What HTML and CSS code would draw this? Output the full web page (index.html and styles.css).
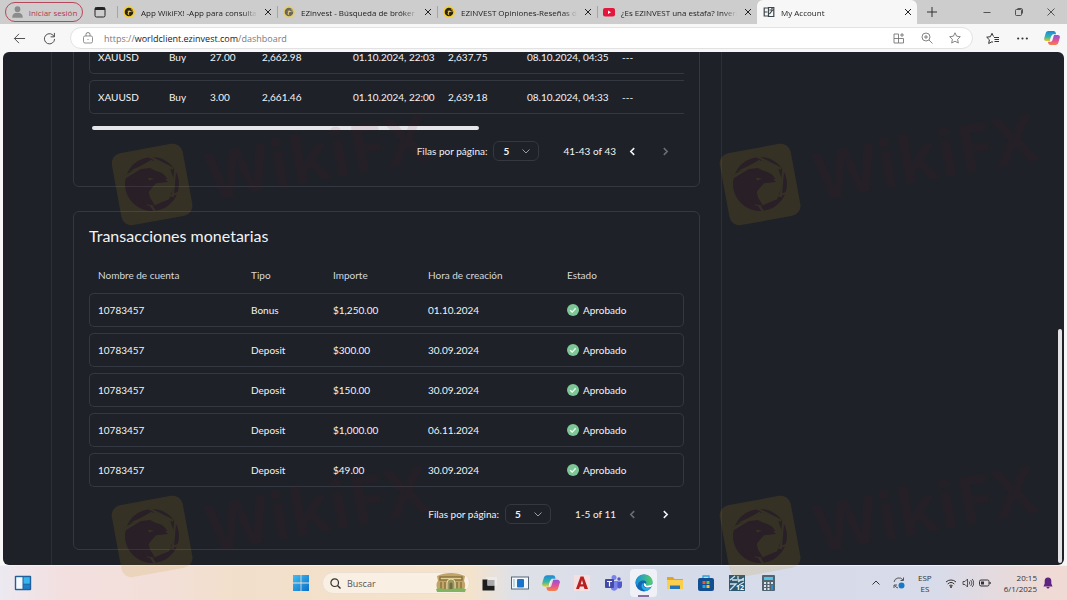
FILE: index.html
```
<!DOCTYPE html>
<html lang="es">
<head>
    <meta charset="UTF-8">
    <meta name="viewport" content="width=device-width, initial-scale=1.0">
    <title>My Account</title>
    <link rel="stylesheet" href="styles.css">
</head>
<body>
    <!-- Shared symbols -->
    <svg class="symbols" aria-hidden="true">
        <symbol id="i-close" viewBox="0 0 8 8"><path d="M1 1l6 6M7 1L1 7" fill="none" stroke="currentColor"/></symbol>
        <symbol id="i-down" viewBox="0 0 8 8"><path d="M0.500 2.500L4 6l3.500-3.500" fill="none" stroke="currentColor"/></symbol>
        <symbol id="i-prev" viewBox="0 0 8 8"><path d="M5.500 1L2.500 4l3 3" fill="none" stroke="currentColor" stroke-width="1.400"/></symbol>
        <symbol id="i-next" viewBox="0 0 8 8"><path d="M2.500 1l3 3-3 3" fill="none" stroke="currentColor" stroke-width="1.400"/></symbol>
        <symbol id="i-check" viewBox="0 0 12 12"><circle cx="6" cy="6" r="6" fill="#7cc795"/><path d="M3.300 6.200l1.900 1.900 3.500-3.800" fill="none" stroke="#f2fff5" stroke-width="1.300"/></symbol>
        <symbol id="i-wiki" viewBox="0 0 12 12"><circle cx="6" cy="6" r="6" fill="#f4d03a"/><circle cx="6" cy="6" r="4.300" fill="#2c2412"/><path d="M6 6.200c1-.3 1.700-.2 2.400-.5L6.800 4.400 4 5l1.300.6L4.500 8l2 1.500c-.8-1.500-.8-2.500-.5-3.300zM7 2.500l2 1.700-.5 2 1-.5v-2z" fill="#f4d03a"/></symbol>
        <symbol id="i-copilot" viewBox="0 0 16 16">
            <defs>
                <linearGradient id="cp-a" x1="0" y1="0" x2="0" y2="1"><stop offset="0" stop-color="#1d86dc"/><stop offset=".6" stop-color="#35b8a5"/><stop offset="1" stop-color="#e8c828"/></linearGradient>
                <linearGradient id="cp-b" x1="0" y1="0" x2="0" y2="1"><stop offset="0" stop-color="#8c54d8"/><stop offset=".5" stop-color="#e0509c"/><stop offset="1" stop-color="#f5824a"/></linearGradient>
            </defs>
            <path d="M4.500 1h5c1.300 0 2 .8 2.300 2l.3 1.300H9.500c-1 0-1.600.6-1.900 1.500L6 11H2.300C.6 11-.2 9.700.2 8.200l1.500-5C2.100 1.900 3 1 4.500 1z" fill="url(#cp-a)"/>
            <path d="M11.500 15h-5c-1.300 0-2-.8-2.300-2l-.3-1.300h2.600c1 0 1.600-.6 1.900-1.500L10 5h3.700c1.700 0 2.500 1.300 2.100 2.800l-1.500 5c-.4 1.300-1.300 2.200-2.800 2.200z" fill="url(#cp-b)"/>
            <path d="M7.600 6L6.400 10.500" stroke="#fff" stroke-width=".8"/>
        </symbol>
        <symbol id="mark" viewBox="0 0 360 150">
            <g transform="rotate(-10.500 60 100)">
                <rect x="24" y="64" width="72" height="73" rx="10" fill="#be9410"/>
                <circle cx="60" cy="100" r="27" fill="#701420"/>
                <g fill="#be9410">
                    <path d="M40 83l26-6 14 8 3 18-9 15-18 4-5-2 3-12 10-8 12 1-6-10-9-7-13-1z"/>
                    <path d="M33 87l31-11 1 2-31 12zM62 71l22 17-1 2-23-18zM87 88l-8 29-2-1 8-28zM88 114l-34 5v-2l34-5zM57 128l-9-20 2-1 9 20z"/>
                </g>
                <path d="M34 93c6-7 20-9 30-6 6 2 11 6 12 11-4-2-8-2-11-1-8 2-11 8-9 17l3 8-8-3-3-6-2 7-5-6 1-5-5 3-3-6 3-4-4 1z" fill="#701420"/>
                <path d="M57 93l6 2-5 1z" fill="#be9410"/>
                <text x="115" y="127" class="mark-text">WikiFX</text>
            </g>
        </symbol>
    </svg>

    <!-- Tab strip -->
    <header class="tab-strip">
        <button class="sign-in">
            <svg viewBox="0 0 16 16"><circle cx="8" cy="4.500" r="3.500"/><path d="M1.500 15c0-4 2-6 6.500-6s6.500 2 6.500 6z"/></svg>
            Iniciar sesión
        </button>
        <button class="workspace" aria-label="Menú de acciones de pestañas">
            <svg viewBox="0 0 12 12"><rect x="1" y="1.500" width="10" height="9.500" rx="1.500" fill="none" stroke="#222"/><path d="M1 1.500h10V4H1z" fill="#222"/></svg>
        </button>
        <nav class="tabs">
            <div class="tab">
                <svg class="tab-icon"><use href="#i-wiki"/></svg>
                <a href="#" class="tab-title">App WikiFX! -App para consultar</a>
                <button class="tab-close" aria-label="Cerrar"><svg><use href="#i-close"/></svg></button>
            </div>
            <div class="tab">
                <svg class="tab-icon faded"><use href="#i-wiki"/></svg>
                <a href="#" class="tab-title">EZinvest - Búsqueda de bróker de</a>
                <button class="tab-close" aria-label="Cerrar"><svg><use href="#i-close"/></svg></button>
            </div>
            <div class="tab">
                <svg class="tab-icon"><use href="#i-wiki"/></svg>
                <a href="#" class="tab-title">EZINVEST Opiniones-Reseñas de</a>
                <button class="tab-close" aria-label="Cerrar"><svg><use href="#i-close"/></svg></button>
            </div>
            <div class="tab">
                <svg class="tab-icon" viewBox="0 0 12 12"><rect y="2" width="12" height="8.500" rx="2" fill="#e3173c"/><path d="M5 4.500v3.500l3-1.750z" fill="#fff"/></svg>
                <a href="#" class="tab-title">¿Es EZINVEST una estafa? Inversión</a>
                <button class="tab-close" aria-label="Cerrar"><svg><use href="#i-close"/></svg></button>
            </div>
            <div class="tab active">
                <svg class="tab-icon" viewBox="0 0 12 12"><path d="M5 2H1.200v8H5M1.200 6H4.500M5.500 1.500h5.300v9H5.500zM6.500 4h3l-3 4M8.500 3l1-1" fill="none" stroke="#3c474c" stroke-width="1.200"/></svg>
                <a href="#" class="tab-title">My Account</a>
                <button class="tab-close" aria-label="Cerrar"><svg><use href="#i-close"/></svg></button>
            </div>
        </nav>
        <button class="new-tab" aria-label="Nueva pestaña"><svg viewBox="0 0 10 10"><path d="M5 0v10M0 5h10" stroke="#333"/></svg></button>
        <div class="window-buttons">
            <button aria-label="Minimizar"><svg viewBox="0 0 8 8"><path d="M0.500 4.500h7" stroke="#333" stroke-width=".8"/></svg></button>
            <button aria-label="Restaurar"><svg viewBox="0 0 8 8"><rect x=".5" y="1.500" width="6" height="6" rx="1" fill="none" stroke="#333" stroke-width=".8"/><path d="M2.500.5H6c1 0 1.500.6 1.500 1.500v3.500" fill="none" stroke="#333" stroke-width=".8"/></svg></button>
            <button aria-label="Cerrar ventana"><svg viewBox="0 0 8 8"><path d="M.5.5l7 7M7.500.5l-7 7" stroke="#333" stroke-width=".8"/></svg></button>
        </div>
    </header>

    <!-- Address bar -->
    <div class="toolbar">
        <button class="tool" aria-label="Atrás"><svg viewBox="0 0 14 14"><path d="M13 7H1.500M6.500 2L1.500 7l5 5" fill="none" stroke="#444"/></svg></button>
        <button class="tool" aria-label="Actualizar"><svg viewBox="0 0 14 14"><path d="M12 5A5.500 5.500 0 1 0 12.500 7.500M12.300 1v4.200H8.200" fill="none" stroke="#444"/></svg></button>
        <div class="address">
            <svg class="address-icon" viewBox="0 0 12 12"><rect x="1.500" y="4" width="9" height="7" rx="1.500" fill="none" stroke="#777" stroke-width=".8"/><path d="M4 4V2.500a2 2 0 0 1 4 0V4M6 7v1" fill="none" stroke="#777" stroke-width=".9"/></svg>
            <a href="#" class="url">https://<span class="host">worldclient.ezinvest.com</span>/dashboard</a>
            <div class="address-actions">
                <svg viewBox="0 0 12 12"><path d="M1 2h4.500v9H1zM1 6.500h9.500V11H5.500M9 1v4M7 3h4" fill="none" stroke="#777" stroke-width=".9"/></svg>
                <svg viewBox="0 0 12 12"><circle cx="5" cy="5" r="4" fill="none" stroke="#777" stroke-width=".9"/><path d="M8 8l3.500 3.500M3 5h4M5 3v4" stroke="#777" stroke-width=".9"/></svg>
                <svg viewBox="0 0 12 12"><path d="M6 .8l1.600 3.400 3.700.5-2.700 2.600.7 3.700L6 9.200 2.700 11l.7-3.700L.7 4.700l3.700-.5z" fill="none" stroke="#777" stroke-width=".9"/></svg>
            </div>
        </div>
        <button class="tool" aria-label="Favoritos"><svg viewBox="0 0 13 12"><path d="M7.500 4L6 .8 4.400 4.200l-3.700.5 2.700 2.600-.7 3.700L6 9.200l1 .6M8 5h5M8.500 7H13M8.500 9H13" fill="none" stroke="#333"/></svg></button>
        <button class="tool" aria-label="Configuración y más"><svg viewBox="0 0 12 12"><g fill="#333"><circle cx="2" cy="6" r="1"/><circle cx="6" cy="6" r="1"/><circle cx="10" cy="6" r="1"/></g></svg></button>
        <button class="tool copilot" aria-label="Copilot"><svg><use href="#i-copilot"/></svg></button>
    </div>

    <!-- Dashboard -->
    <main class="view">
        <div class="content">
            <section class="panel">
                <div class="table-clip">
                    <table class="rows positions">
                        <colgroup>
                            <col class="c-symbol"><col class="c-side"><col class="c-volume"><col class="c-open">
                            <col class="c-time"><col class="c-close"><col class="c-time-close"><col>
                        </colgroup>
                        <tbody>
                            <tr><td>XAUUSD</td><td>Buy</td><td>27.00</td><td>2,662.98</td><td>01.10.2024, 22:03</td><td>2,637.75</td><td>08.10.2024, 04:35</td><td>---</td></tr>
                            <tr><td>XAUUSD</td><td>Buy</td><td>3.00</td><td>2,661.46</td><td>01.10.2024, 22:00</td><td>2,639.18</td><td>08.10.2024, 04:33</td><td>---</td></tr>
                        </tbody>
                    </table>
                    <div class="h-scroll"></div>
                </div>
                <div class="pager">
                    <label for="rows-positions">Filas por página:</label>
                    <span class="select">
                        <select id="rows-positions"><option>5</option><option>10</option></select>
                        <svg><use href="#i-down"/></svg>
                    </span>
                    <span class="range">41-43 of 43</span>
                    <button aria-label="Anterior"><svg><use href="#i-prev"/></svg></button>
                    <button aria-label="Siguiente" disabled><svg><use href="#i-next"/></svg></button>
                </div>
            </section>

            <section class="panel">
                <h2>Transacciones monetarias</h2>
                <table class="rows transactions">
                    <colgroup>
                        <col class="c-account"><col class="c-type"><col class="c-amount"><col class="c-created"><col>
                    </colgroup>
                    <thead>
                        <tr><th>Nombre de cuenta</th><th>Tipo</th><th>Importe</th><th>Hora de creación</th><th>Estado</th></tr>
                    </thead>
                    <tbody>
                        <tr><td>10783457</td><td>Bonus</td><td>$1,250.00</td><td>01.10.2024</td><td><span class="status"><svg><use href="#i-check"/></svg>Aprobado</span></td></tr>
                        <tr><td>10783457</td><td>Deposit</td><td>$300.00</td><td>30.09.2024</td><td><span class="status"><svg><use href="#i-check"/></svg>Aprobado</span></td></tr>
                        <tr><td>10783457</td><td>Deposit</td><td>$150.00</td><td>30.09.2024</td><td><span class="status"><svg><use href="#i-check"/></svg>Aprobado</span></td></tr>
                        <tr><td>10783457</td><td>Deposit</td><td>$1,000.00</td><td>06.11.2024</td><td><span class="status"><svg><use href="#i-check"/></svg>Aprobado</span></td></tr>
                        <tr><td>10783457</td><td>Deposit</td><td>$49.00</td><td>30.09.2024</td><td><span class="status"><svg><use href="#i-check"/></svg>Aprobado</span></td></tr>
                    </tbody>
                </table>
                <div class="pager">
                    <label for="rows-transactions">Filas por página:</label>
                    <span class="select">
                        <select id="rows-transactions"><option>5</option><option>10</option></select>
                        <svg><use href="#i-down"/></svg>
                    </span>
                    <span class="range">1-5 of 11</span>
                    <button aria-label="Anterior" disabled><svg><use href="#i-prev"/></svg></button>
                    <button aria-label="Siguiente"><svg><use href="#i-next"/></svg></button>
                </div>
            </section>
        </div>
        <div class="side"><div class="v-scroll"></div></div>
    </main>

    <!-- Taskbar -->
    <footer class="taskbar">
        <div class="task-left">
            <button aria-label="Widgets"><svg viewBox="0 0 18 16"><rect x=".8" y=".8" width="16.400" height="14.400" rx="1" fill="#1f5f9c"/><rect x="2.200" y="2.200" width="6.300" height="11.600" fill="#f4f9fd"/><rect x="9.500" y="2.200" width="6.300" height="6.500" fill="#38b5ee"/><rect x="9.500" y="9.500" width="6.300" height="4.300" fill="#1c7fc9"/></svg></button>
        </div>
        <div class="task-center">
            <button aria-label="Inicio"><svg viewBox="0 0 18 18"><defs><linearGradient id="win" x1="0" y1="0" x2="1" y2="1"><stop offset="0" stop-color="#43bdf5"/><stop offset="1" stop-color="#0a6fc8"/></linearGradient></defs><path d="M1 1h7.600v7.600H1zM9.400 1H17v7.600H9.400zM1 9.400h7.600V17H1zM9.400 9.400H17V17H9.400z" fill="url(#win)"/></svg></button>
            <label class="search">
                <svg class="search-icon" viewBox="0 0 11 11"><circle cx="4.700" cy="4.700" r="3.800" fill="none" stroke="#333" stroke-width="1.200"/><path d="M7.500 7.500L10.500 10.500" stroke="#333" stroke-width="1.400"/></svg>
                <input type="text" placeholder="Buscar" aria-label="Buscar">
                <svg class="search-art" viewBox="0 0 32 20"><path d="M2 3c8-4 20-4 28 0l-1 5c2 3 1 7 0 9H3C1 14 1 10 3 8z" fill="#c2a468"/><path d="M5 4h22v3H5zM6 9v8M10 9v8M22 9v8M26 9v8" stroke="#89743f" stroke-width="1.500" fill="#e4cf95"/><path d="M12 18V10a4 4 0 0 1 8 0v8z" fill="#9d9862" stroke="#e9d9ab"/><path d="M14.500 18v-7a1.500 1.500 0 0 1 3 0v7z" fill="#6e6c42"/><path d="M1 16c5-2 8 1 15 0s10-1 15 0l-1 3H2z" fill="#80b45f"/></svg>
            </label>
            <nav class="apps">
                <button aria-label="Vista de tareas"><svg viewBox="0 0 18 18"><path d="M6 3h11v9H6z" fill="#eceaea"/><path d="M2.500 5.500v11h12v-5h-7v-6z" fill="#1c1c1c"/><path d="M7.500 6h7v5.500h-7z" fill="#a9a9a9"/></svg></button>
                <button aria-label="Aplicación"><svg viewBox="0 0 18 18"><rect x=".5" y="3" width="17" height="12" fill="#f2f8fd" stroke="#567"/><rect x="6" y="5" width="7" height="8.500" rx="1" fill="#1874ca"/><path d="M3 5v8" stroke="#8bb"/></svg></button>
                <button aria-label="Copilot"><svg><use href="#i-copilot"/></svg></button>
                <button aria-label="AutoCAD"><svg viewBox="0 0 18 18"><rect x="1" y="1" width="16" height="16" fill="#f6dfe0"/><path d="M7.500 2.500h3L15 15h-3.500l-.8-2.500H7L6 15H3zM9 6l-1.300 4.200h2.500z" fill="#b8201f" fill-rule="evenodd"/></svg></button>
                <button aria-label="Teams"><svg viewBox="0 0 18 18"><circle cx="10" cy="3.500" r="2.500" fill="#7b83eb"/><circle cx="15" cy="5" r="1.700" fill="#5059c9"/><path d="M7 7h7v6a3.800 3.800 0 0 1-7 2z" fill="#7b83eb"/><path d="M13.500 7.500H18v4.500a2.500 2.500 0 0 1-4.500 1.500z" fill="#5059c9"/><rect x="1" y="5" width="9" height="9" rx="1" fill="#4249a8"/><path d="M3 7.500h5M5.500 7.500v5" stroke="#fff" stroke-width="1.200"/></svg></button>
                <button class="current" aria-label="Edge"><svg viewBox="0 0 18 18"><defs><linearGradient id="edge" x1="0" y1="0" x2="1" y2="0"><stop offset="0" stop-color="#1691df"/><stop offset="1" stop-color="#55cf62"/></linearGradient></defs><circle cx="9" cy="9" r="8.500" fill="#1267b5"/><path d="M.6 8.500C1 3.700 4.500.5 9 .5c5 0 8.500 3.500 8.500 7 0 2.500-2 4-4.500 4-1.700 0-2.600-.6-2-1.400.8-1.200.4-3.600-2.500-3.600C5 6.500 3 8 2.500 12 1.500 11 .6 9.800.6 8.500z" fill="url(#edge)"/><path d="M8.500 8.500c-1.700 3 .8 5.600 4 5.600 1.500 0 2.800-.5 4-1.200C15.500 14 14 16 11.500 17 7 16 4.500 11.500 8.500 8.500z" fill="#2fa8e6"/><path d="M9 9c-1 2.500 1 4.600 4.300 4.500 1.500 0 3-.6 4.200-1.700v-2c-1 1.200-2.700 1.700-4.500 1.700-1.800 0-2.700-.7-2-1.600z" fill="#fff"/></svg></button>
                <button aria-label="Explorador de archivos"><svg viewBox="0 0 18 18"><path d="M1 3h6l1.500 2H17v10H1z" fill="#e3a325"/><path d="M1 6h16v9H1z" fill="#fbcf4e"/><path d="M4 15v-3.500h10V15z" fill="#2476b9"/></svg></button>
                <button aria-label="Microsoft Store"><svg viewBox="0 0 18 18"><path d="M6 4V2h6v2" fill="none" stroke="#2aa4dd" stroke-width="1.300"/><rect x="1" y="4" width="16" height="13" rx="2" fill="#134e91"/><path d="M5.500 7h3v3h-3z" fill="#ef5a2b"/><path d="M9.500 7h3v3h-3z" fill="#83be3b"/><path d="M5.500 11h3v3h-3z" fill="#25a5e5"/><path d="M9.500 11h3v3h-3z" fill="#fac22d"/></svg></button>
                <button aria-label="ZWCAD"><svg viewBox="0 0 18 18"><rect x="1" y="1" width="16" height="16" fill="#2d5870"/><path d="M2 6l5-4M2 10h6l-6 6M10 2v4h6M10 8l6-4M16 8l-5 3M4 6h5" fill="none" stroke="#cfe2ea" stroke-width="1.300"/><text x="8" y="16" class="badge-text">12</text></svg></button>
                <button aria-label="Calculadora"><svg viewBox="0 0 18 18"><rect x="3" y="1" width="13" height="16" rx="1" fill="#53636f"/><path d="M5 3h9v3H5z" fill="#50c3e9"/><path d="M5 8h2v2H5zM8.500 8h2v2h-2zM5 11h2v2H5zM8.500 11h2v2h-2zM5 14h2v2H5zM8.500 14h2v2h-2zM12 8h2v2h-2z" fill="#dbe4e9"/><path d="M12 11h2v5h-2z" fill="#2a8ccc"/></svg></button>
            </nav>
        </div>
        <div class="tray">
            <svg class="tray-small" viewBox="0 0 8 8"><path d="M.5 5.500L4 2l3.500 3.500" fill="none" stroke="#333"/></svg>
            <svg class="tray-icon" viewBox="0 0 12 12"><path d="M1 5a5 5 0 0 1 9-2M10.500.5V3.500H7.500M5 11a5 5 0 0 1-3.500-3M1 11V8h3" fill="none" stroke="#555"/><circle cx="8.500" cy="8.500" r="3" fill="#1878c8"/></svg>
            <span class="lang">ESP<br>ES</span>
            <div class="tray-group">
                <svg class="tray-icon" viewBox="0 0 12 12"><path d="M1 5a7.200 7.200 0 0 1 10 0M2.700 7a4.800 4.800 0 0 1 6.600 0M4.300 8.800a2.500 2.500 0 0 1 3.400 0" fill="none" stroke="#333"/><circle cx="6" cy="10" r="1" fill="#333"/></svg>
                <svg class="tray-icon" viewBox="0 0 12 12"><path d="M1 4.500h2L5.500 2v8L3 7.500H1zM7.200 4.500a2.500 2.500 0 0 1 0 3M8.700 3a4.500 4.500 0 0 1 0 6M10.200 2a6 6 0 0 1 0 8" fill="none" stroke="#333" stroke-width=".8"/></svg>
                <svg class="tray-icon" viewBox="0 0 12 12"><rect x=".5" y="3" width="9.500" height="6" rx="1.500" fill="none" stroke="#333"/><path d="M2 4.500h3v3H2zM10.500 5h1.200v2h-1.200z" fill="#333"/></svg>
            </div>
            <time class="clock">20:15<br>6/1/2025</time>
            <svg class="bell" viewBox="0 0 10 12"><path d="M5 .5C2.700.5 1.700 2 1.700 4v2.500L.5 9.500h9L8.300 6.500V4C8.300 2 7.300.5 5 .5zM3.500 10a1.500 1.500 0 0 0 3 0z" fill="#5d2482"/></svg>
        </div>
    </footer>

    <!-- Overlay marks -->
    <div class="marks" aria-hidden="true">
        <svg><use href="#mark"/></svg>
        <svg><use href="#mark"/></svg>
        <svg><use href="#mark"/></svg>
        <svg><use href="#mark"/></svg>
    </div>
</body>
</html>
```

FILE: styles.css
```
:root {
    --color-page: #1e2128;
    --color-line: #343840;
    --color-text: #f2f3f6;
    --color-strip: #cdcdcd;
    --color-chrome: #f7f7f7;
    --font-app: Lato, "Open Sans", sans-serif;
    --font-system: "Open Sans", "Noto Sans", sans-serif;
}

* {
    box-sizing: border-box;
}

body {
    margin: 0;
    height: 100vh;
    display: flex;
    flex-direction: column;
    overflow: hidden;
    background-color: var(--color-chrome);
    font-family: var(--font-system);
    font-size: 9px;
    color: #222;
}

button {
    display: flex;
    align-items: center;
    justify-content: center;
    margin: 0;
    padding: 0;
    border: 0;
    background: none;
    font: inherit;
    color: inherit;
}

a {
    color: inherit;
    text-decoration: none;
}

.symbols {
    position: absolute;
    width: 0;
    height: 0;
}

/* Tab strip */
.tab-strip {
    flex: none;
    display: flex;
    align-items: center;
    height: 24px;
    padding-left: 5px;
    background-color: var(--color-strip);
}

.sign-in {
    flex: none;
    gap: 5px;
    width: 78px;
    height: 20px;
    border: 1px solid #b5485a;
    border-radius: 10px;
    color: #b23a4e;
    font-size: 8px;
    white-space: nowrap;
}

.sign-in svg {
    width: 13px;
    height: 14px;
    fill: #8b8b8b;
}

.workspace {
    flex: none;
    width: 34px;
}

.workspace svg {
    width: 12px;
    height: 12px;
}

.tabs {
    flex: 0 1 800px;
    min-width: 0;
    align-self: stretch;
    display: flex;
}

.tab {
    flex: 1 1 0;
    min-width: 0;
    display: flex;
    align-items: center;
    gap: 6px;
    padding: 0 4px 0 6px;
    background: linear-gradient(#a5a5a5, #a5a5a5) 0 6px / 1px 12px no-repeat;
}

.tab.active {
    background: var(--color-chrome);
    border-radius: 6px 6px 0 0;
}

.tab-icon {
    flex: none;
    width: 12px;
    height: 12px;
}

.tab-icon.faded {
    opacity: 0.6;
}

.tab-title {
    flex: 1;
    min-width: 0;
    overflow: hidden;
    white-space: nowrap;
    font-size: 8px;
    mask-image: linear-gradient(to right, #000 88%, transparent);
}

.tab-close {
    flex: none;
    width: 10px;
    height: 16px;
}

.tab-close svg {
    width: 8px;
    height: 8px;
}

.new-tab {
    flex: none;
    width: 30px;
}

.new-tab svg {
    width: 10px;
    height: 10px;
}

.window-buttons {
    flex: none;
    display: flex;
    margin-left: auto;
}

.window-buttons button {
    width: 32px;
    height: 24px;
}

.window-buttons svg {
    width: 8px;
    height: 8px;
}

/* Address bar */
.toolbar {
    flex: none;
    display: flex;
    align-items: center;
    height: 28px;
    padding-left: 4px;
}

.tool {
    flex: none;
    width: 30px;
    height: 24px;
}

.tool svg {
    width: 13px;
    height: 13px;
}

.copilot svg {
    width: 16px;
    height: 16px;
}

.address {
    flex: 1;
    min-width: 0;
    display: flex;
    align-items: center;
    gap: 10px;
    height: 22px;
    margin: 0 4px 0 6px;
    padding: 0 11px;
    border: 1px solid #e2e2e2;
    border-radius: 11px;
    background-color: #fff;
}

.address-icon,
.address-actions svg {
    flex: none;
    width: 12px;
    height: 12px;
}

.url {
    flex: 1;
    font-size: 9px;
    color: #7a7a7a;
}

.host {
    color: #222;
}

.address-actions {
    display: flex;
    gap: 16px;
}

/* Dashboard */
.view {
    flex: 1;
    min-height: 0;
    display: grid;
    grid-template-columns: minmax(0, 671fr) 342fr;
    grid-template-rows: minmax(0, 1fr);
    margin: 0 3px;
    padding-left: 48px;
    overflow: hidden;
    border-radius: 6px;
    background-color: var(--color-page);
    font-family: var(--font-app);
    font-size: 10px;
    color: var(--color-text);
}

.content {
    min-width: 0;
    display: flex;
    flex-direction: column;
    justify-content: flex-end;
    gap: 24px;
    padding: 0 21px 15px;
    border: solid #2b2f37;
    border-width: 0 1px;
}

.side {
    display: flex;
    align-items: flex-end;
    justify-content: flex-end;
    padding: 2px;
}

.v-scroll {
    width: 4px;
    height: 46%;
    border-radius: 2px;
    background-color: #e3e3e6;
}

.panel {
    flex: none;
    padding: 15px 15px 25px;
    border: 1px solid var(--color-line);
    border-radius: 6px;
}

.panel h2 {
    margin: 0 0 12px;
    font-size: 16px;
    line-height: 18px;
    font-weight: 400;
}

.table-clip {
    overflow: hidden;
}

.rows {
    width: 100%;
    table-layout: fixed;
    border-collapse: separate;
    border-spacing: 0 6px;
}

.rows th {
    height: 24px;
    padding: 0 9px;
    font-weight: 400;
    text-align: left;
    color: #d5d8de;
}

.rows td {
    height: 34px;
    padding: 0 9px;
    border: solid var(--color-line);
    border-width: 1px 0;
    white-space: nowrap;
}

.rows td:first-child {
    padding-left: 8px;
    border-left-width: 1px;
    border-radius: 5px 0 0 5px;
}

.rows td:last-child {
    border-right-width: 1px;
    border-radius: 0 5px 5px 0;
}

.positions {
    width: 917px;
}

.c-symbol { width: 71px; }
.c-side { width: 41px; }
.c-volume { width: 52px; }
.c-open { width: 91px; }
.c-time { width: 95px; }
.c-close { width: 79px; }
.c-time-close { width: 95px; }

.c-account { width: 153px; }
.c-type { width: 82px; }
.c-amount { width: 95px; }
.c-created { width: 139px; }

.h-scroll {
    width: 65%;
    height: 4px;
    margin: 6px 0 0 3px;
    border-radius: 2px;
    background-color: #e6e6ea;
}

.status {
    display: flex;
    align-items: center;
    gap: 4px;
}

.status svg {
    width: 12px;
    height: 12px;
}

.pager {
    display: flex;
    align-items: center;
    justify-content: flex-end;
    margin-top: 11px;
    padding-right: 2px;
}

.select {
    display: grid;
    align-items: center;
    width: 46px;
    margin: 0 24px 0 6px;
}

.select select,
.select svg {
    grid-area: 1 / 1;
}

.select select {
    width: 100%;
    height: 20px;
    padding: 0 9px;
    appearance: none;
    border: 1px solid var(--color-line);
    border-radius: 6px;
    background: none;
    font: bold 10px var(--font-app);
    color: inherit;
}

.select svg {
    justify-self: end;
    width: 8px;
    height: 8px;
    margin-right: 9px;
    color: #9a9da3;
    pointer-events: none;
}

.pager button {
    width: 33px;
    height: 20px;
}

.pager button svg {
    width: 9px;
    height: 9px;
}

.pager button:disabled {
    color: #6a6d74;
}

/* Taskbar */
.taskbar {
    flex: none;
    display: grid;
    grid-template-columns: 1fr auto 1fr;
    align-items: center;
    height: 35px;
    border-top: 1px solid #f4f1f2;
    background: linear-gradient(to right, #ece9f1 0%, #f3dfdf 6%, #f3dfd9 15%, #f2dfcb 22%, #f5e3cb 44%, #dfe1e7 48%, #d6dbea 62%, #d8dbe9 88%, #efdad5 98%);
}

.task-left {
    padding-left: 14px;
}

.task-left svg {
    width: 18px;
    height: 16px;
}

.task-center {
    display: flex;
    align-items: center;
    padding-left: 6px;
}

.task-center svg {
    width: 18px;
    height: 18px;
}

.search {
    display: flex;
    align-items: center;
    gap: 6px;
    width: 148px;
    height: 22px;
    margin: 0 5px 0 12px;
    padding: 0 2px 0 7px;
    border: 1px solid #ecdfd3;
    border-radius: 11px;
    background-color: #f9efe3;
}

.search input {
    flex: 1;
    min-width: 0;
    padding: 0;
    border: 0;
    outline: 0;
    background: none;
    font: 9px var(--font-system);
}

.search input::placeholder {
    color: #555;
    opacity: 1;
}

.search .search-icon {
    flex: none;
    width: 11px;
    height: 11px;
}

.search .search-art {
    flex: none;
    width: 32px;
    height: 20px;
}

.apps {
    display: flex;
    gap: 4px;
}

.apps button {
    width: 27px;
    height: 28px;
}

.apps .current {
    border-radius: 4px;
    background: linear-gradient(#8b6a9f, #8b6a9f) center bottom / 11px 2px no-repeat, #f0f1f7;
}

.tray {
    display: flex;
    align-items: center;
    justify-content: flex-end;
    gap: 13px;
    padding-right: 14px;
    font-size: 8px;
    line-height: 11px;
    color: #333;
}

.tray-small {
    width: 8px;
    height: 8px;
}

.tray-icon {
    width: 12px;
    height: 12px;
}

.lang {
    text-align: center;
}

.tray-group {
    display: flex;
    gap: 5px;
}

.clock {
    text-align: right;
}

.bell {
    width: 10px;
    height: 12px;
    margin-left: -7px;
}

.badge-text {
    font: bold 7px var(--font-system);
    fill: #fff;
}

/* Overlay marks */
.marks {
    position: absolute;
    top: 84px;
    right: 0;
    bottom: 0;
    left: 92px;
    display: grid;
    grid-template-columns: 608px 360px;
    grid-template-rows: 352px 150px;
    overflow: hidden;
    pointer-events: none;
}

.marks svg {
    width: 360px;
    height: 150px;
    opacity: 0.14;
}

.mark-text {
    font: bold 66px "Open Sans", sans-serif;
    fill: #701420;
    fill-opacity: 0.6;
}
```
